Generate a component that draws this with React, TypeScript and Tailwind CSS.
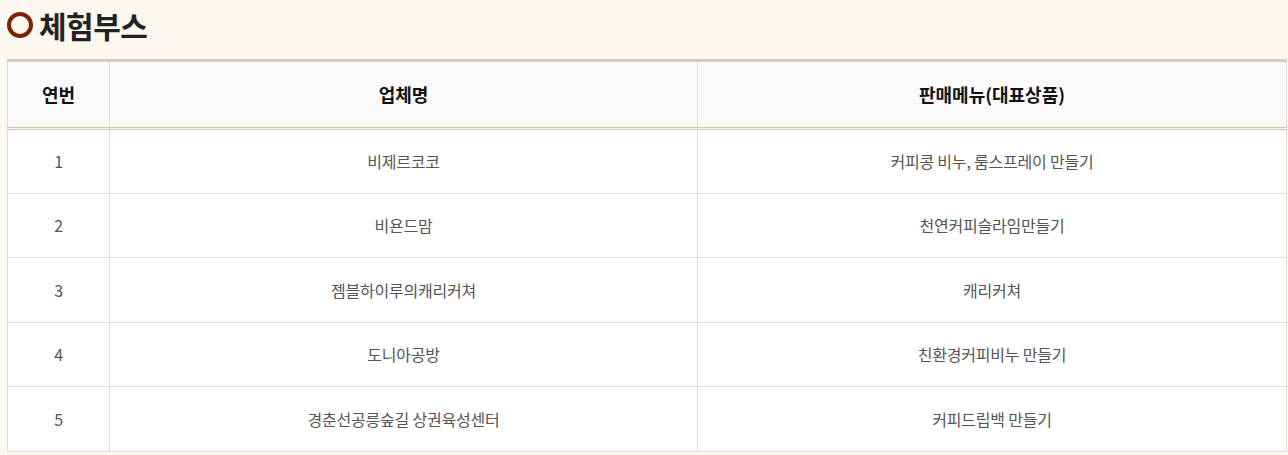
import React from "react";

const rows = [
  ["1", "비제르코코", "커피콩 비누, 룸스프레이 만들기"],
  ["2", "비욘드맘", "천연커피슬라임만들기"],
  ["3", "젬블하이루의캐리커쳐", "캐리커쳐"],
  ["4", "도니아공방", "친환경커피비누 만들기"],
  ["5", "경춘선공릉숲길 상권육성센터", "커피드립백 만들기"],
];

export default function App() {
  return (
    <div
      className="min-h-[455px] w-[1288px] bg-[#fcf7ef] pl-[7px] pr-[1px]"
      style={{ fontFamily: '"Noto Sans CJK KR", "Noto Sans", sans-serif' }}
    >
      <div className="flex h-[59px] items-center pb-[10px]">
        <span className="box-border block h-[26px] w-[26px] rounded-full border-[4px] border-[#7a2305]" />
        <h1 className="ml-[6px] text-[30px] font-bold leading-none tracking-[-0.5px] text-[#222]">체험부스</h1>
      </div>
      <table className="w-[1280px] table-fixed border-collapse border-t-[3px] border-t-[#dccab7] bg-white">
        <colgroup>
          <col className="w-[102px]" />
          <col className="w-[588px]" />
          <col />
        </colgroup>
        <thead>
          <tr className="h-[68px] bg-[#fafafa]">
            {["연번", "업체명", "판매메뉴(대표상품)"].map((h) => (
              <th
                key={h}
                className="border-x border-x-[#ddd] border-b-[3px] border-b-[#dcc4a8] [border-bottom-style:double] text-[18px] font-bold text-[#111]"
              >
                {h}
              </th>
            ))}
          </tr>
        </thead>
        <tbody>
          {rows.map((r) => (
            <tr key={r[0]} className="h-[64.5px]">
              {r.map((c, i) => (
                <td key={i} className="border border-[#ddd] text-center text-[16px] tracking-[-0.2px] text-[#555]">
                  {c}
                </td>
              ))}
            </tr>
          ))}
        </tbody>
      </table>
    </div>
  );
}
